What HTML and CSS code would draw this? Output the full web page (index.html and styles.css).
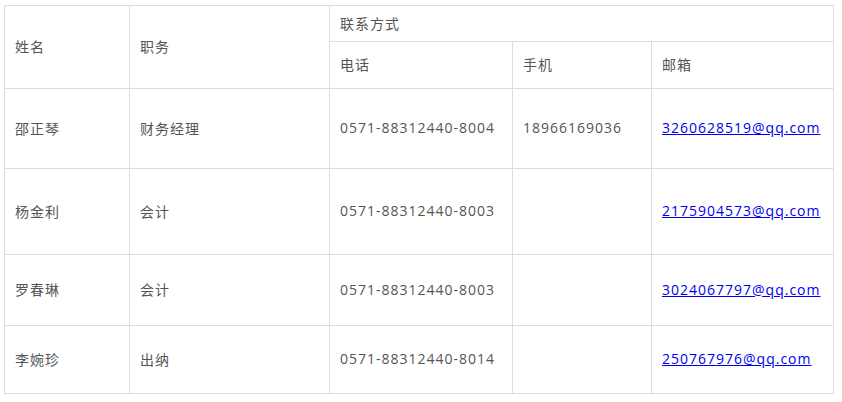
FILE: index.html
```html
<!DOCTYPE html>
<html lang="zh">
<head>
<meta charset="utf-8">
<link rel="stylesheet" href="styles.css">
</head>
<body>
<table class="grid">
  <colgroup>
    <col class="c-name">
    <col class="c-title">
    <col class="c-tel">
    <col class="c-mobile">
    <col class="c-mail">
  </colgroup>
  <thead>
    <tr class="h1">
      <th rowspan="2">姓名</th>
      <th rowspan="2">职务</th>
      <th colspan="3">联系方式</th>
    </tr>
    <tr class="h2">
      <th>电话</th>
      <th>手机</th>
      <th>邮箱</th>
    </tr>
  </thead>
  <tbody>
    <tr class="r1">
      <td>邵正琴</td>
      <td>财务经理</td>
      <td>0571-88312440-8004</td>
      <td>18966169036</td>
      <td><a href="mailto:3260628519@qq.com">3260628519@qq.com</a></td>
    </tr>
    <tr class="r2">
      <td>杨金利</td>
      <td>会计</td>
      <td>0571-88312440-8003</td>
      <td></td>
      <td><a href="mailto:2175904573@qq.com">2175904573@qq.com</a></td>
    </tr>
    <tr class="r3">
      <td>罗春琳</td>
      <td>会计</td>
      <td>0571-88312440-8003</td>
      <td></td>
      <td><a href="mailto:3024067797@qq.com">3024067797@qq.com</a></td>
    </tr>
    <tr class="r4">
      <td>李婉珍</td>
      <td>出纳</td>
      <td>0571-88312440-8014</td>
      <td></td>
      <td><a href="mailto:250767976@qq.com">250767976@qq.com</a></td>
    </tr>
  </tbody>
</table>
</body>
</html>
```

FILE: styles.css
```css
html, body {
  margin: 0;
  background: #fff;
}
body {
  padding: 5px 0 0 4px;
  font-family: "Open Sans", "Noto Sans CJK SC", sans-serif;
  font-size: 14px;
  color: #555;
}
.grid {
  border-collapse: collapse;
  table-layout: fixed;
  width: 829px;
}
.c-name { width: 125px; }
.c-title { width: 200px; }
.c-tel { width: 183px; }
.c-mobile { width: 139px; }
.c-mail { width: 182px; }
.grid th,
.grid td {
  border: 1px solid #dddddd;
  padding: 0 10px 2px;
  text-align: left;
  font-weight: normal;
  vertical-align: middle;
  letter-spacing: 1px;
  white-space: nowrap;
}
.grid a {
  color: #0000ee;
  text-decoration: underline;
}
.h1 { height: 36px; }
.h2 { height: 47px; }
.r1 { height: 80px; }
.r2 { height: 86px; }
.r3 { height: 71px; }
.r4 { height: 68px; }
```
